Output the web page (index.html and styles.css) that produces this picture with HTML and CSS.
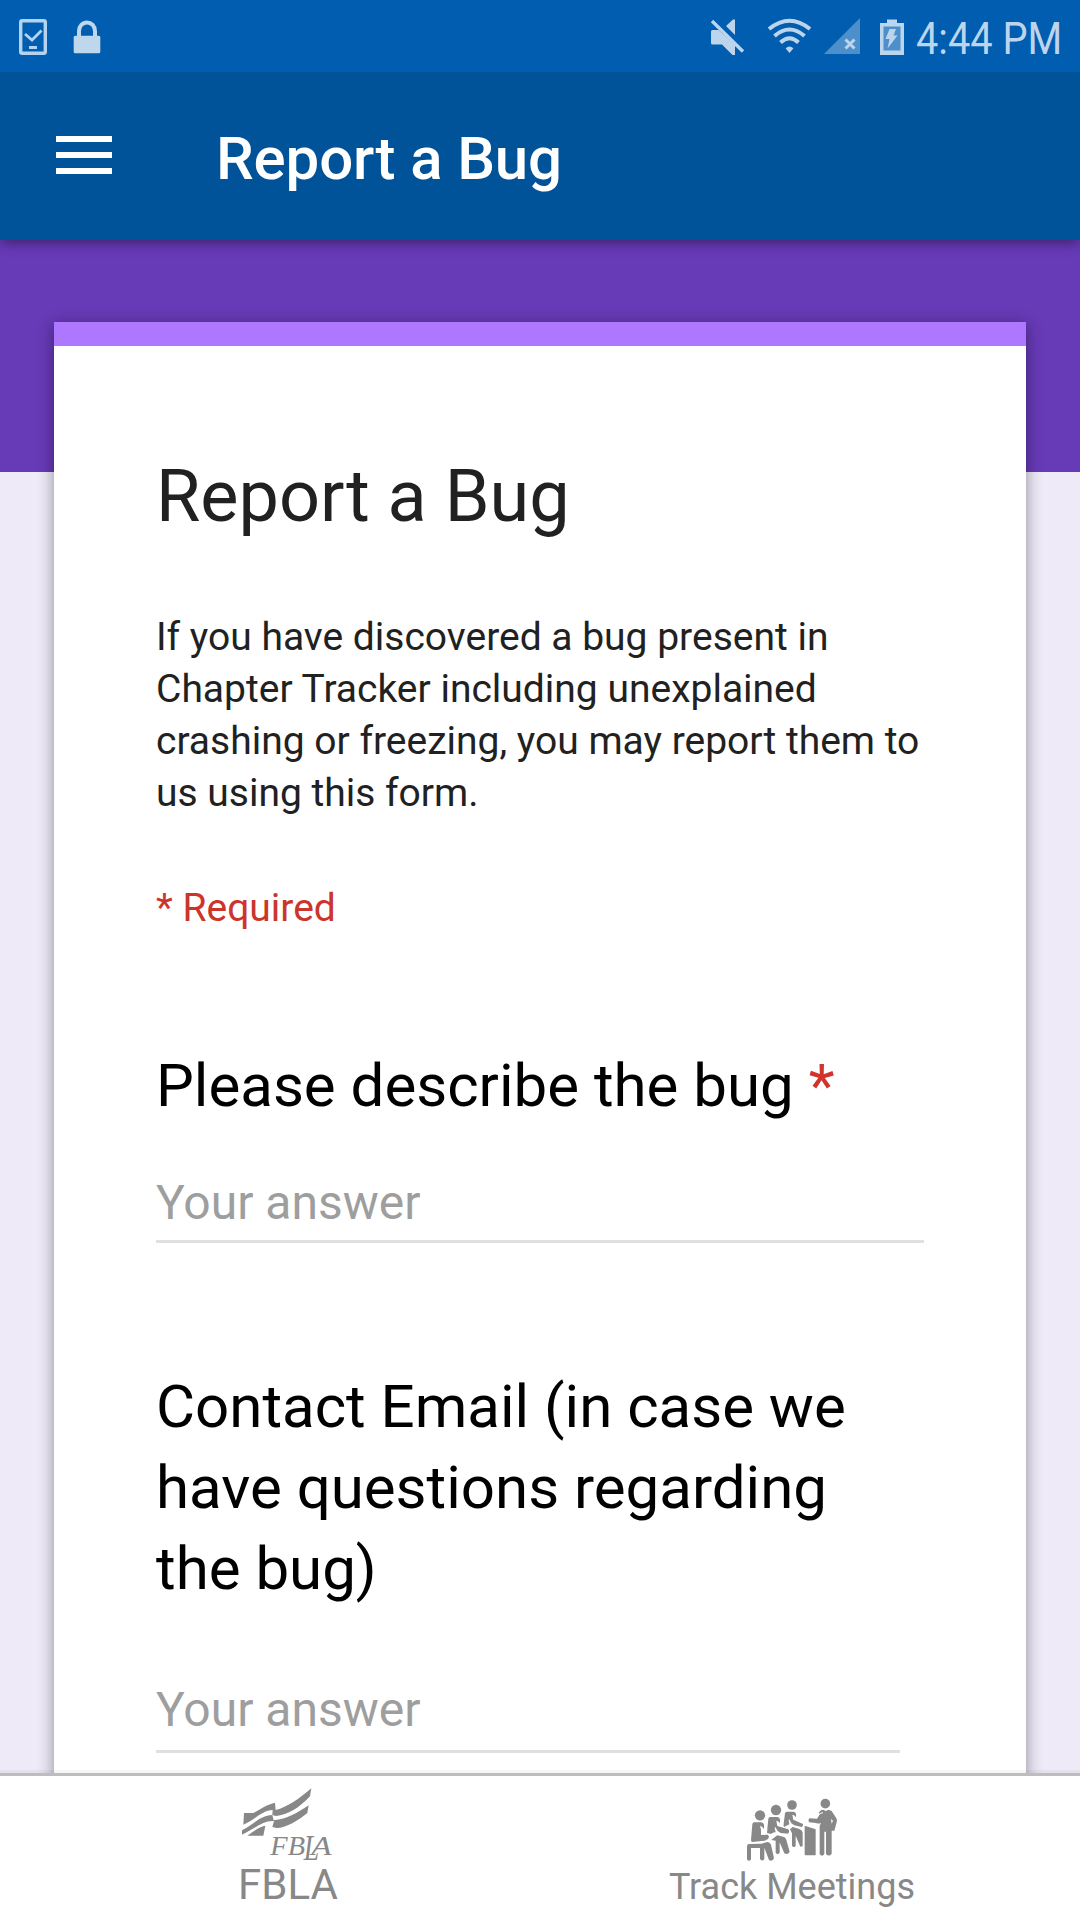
FILE: index.html
```html
<!DOCTYPE html>
<html lang="en">
<head>
<meta charset="utf-8">
<title>Report a Bug</title>
<link rel="stylesheet" href="styles.css">
</head>
<body>
<header class="top">
  <div class="status">
    <div class="status-left">
      <svg class="device" viewBox="19 19 28 36" width="28" height="36">
        <rect x="20.7" y="20.7" width="24.6" height="32.6" rx="1.5" fill="none" stroke="#b5d2f0" stroke-width="3.4"/>
        <path d="M25 34l7 6 9.500-9.500" fill="none" stroke="#b5d2f0" stroke-width="2.800"/>
        <path d="M29 47.500h8" stroke="#b5d2f0" stroke-width="3"/>
      </svg>
      <svg class="lock" viewBox="73 20 28 34" width="28" height="34">
        <path d="M79 37v-6a8 8.500 0 0 1 16 0v6" fill="none" stroke="#bfd7ec" stroke-width="4"/>
        <rect x="73.700" y="35.700" width="26.600" height="17.500" rx="1.500" fill="#bfd7ec"/>
      </svg>
    </div>
    <svg class="signals" viewBox="704 12 204 48" width="204" height="48">
      <g fill="#bcd5ec">
        <path d="M712.500 30h6L735 45v10h-2.500L722 44.500h-9.500q-1.500 0-1.500-1.500V31.500q0-1.500 1.500-1.500z"/>
        <path d="M726 26l7-6.500h2V35z"/>
        <path d="M714 19l32 32" fill="none" stroke="#005db0" stroke-width="3"/>
        <path d="M712 21l31 30.500" fill="none" stroke="#bcd5ec" stroke-width="3.400"/>
        <path d="M785.600 48.200q4-3.200 7.800 0l-3.900 4.800z"/>
      </g>
      <g fill="none" stroke="#bcd5ec" stroke-width="4">
        <path d="M769 29Q789.500 12.500 810 29"/>
        <path d="M774.500 36Q789.500 23 804.500 36"/>
        <path d="M780.500 42.500Q789.500 34 798.500 42.500"/>
      </g>
      <path d="M824 54l36-36v36z" fill="#4d8fcb"/>
      <path d="M845.500 39.500l9 9m0-9l-9 9" stroke="#bcd5ec" stroke-width="3"/>
      <path d="M887 19.500h10V23h7v32h-24V23h7z" fill="#bcd5ec"/>
      <path d="M883.500 26.500h17v24h-17z" fill="#4d8fcb"/>
      <path d="M889.500 29h6.500l-2.500 6.500h4L887.500 48.500l2-9.500h-4z" fill="#bcd5ec"/>
    </svg>
    <span class="clock">4:44 PM</span>
  </div>
  <div class="appbar">
    <div class="menu"><i></i><i></i><i></i></div>
    <div class="appbar-title">Report a Bug</div>
  </div>
</header>
<main class="page">
  <section class="card">
    <h1>Report a Bug</h1>
    <p class="desc">If you have discovered a bug present in<br>Chapter Tracker including unexplained<br>crashing or freezing, you may report them to<br>us using this form.</p>
    <p class="required">* Required</p>
    <div class="question q1">Please describe the bug <span class="star">*</span></div>
    <div class="answer a1">Your answer</div>
    <div class="question q2">Contact Email (in case we<br>have questions regarding<br>the bug)</div>
    <div class="answer a2">Your answer</div>
  </section>
</main>
<nav class="tabs">
  <div class="tab tab-fbla">
    <svg viewBox="120 72 282 240" width="94" height="80" fill="#888">
      <path d="M132 159h28C182 147 202 133 225 128L227 150C262 142 298 116 334 85L330 109C300 142 262 166 228 168L217 165 218 150C188 150 166 178 130 194z"/>
      <path d="M126 211C158 196 180 166 217 165L221 181C262 178 292 158 326 136L322 159C292 183 258 204 230 204L217 201 222 183C190 180 164 206 126 224z"/>
      <path d="M142 227C158 217 176 200 196 197L190 227z"/>
      <g class="logo-text">
        <text x="211" y="284" font-size="85" textLength="104" lengthAdjust="spacingAndGlyphs">FB</text>
        <text x="311" y="300" font-size="107" textLength="46" lengthAdjust="spacingAndGlyphs">L</text>
        <text x="334" y="284" font-size="85" textLength="61" lengthAdjust="spacingAndGlyphs">A</text>
      </g>
    </svg>
    <span class="label fbla-label">FBLA</span>
  </div>
  <div class="tab tab-meet">
    <svg viewBox="318 114 276 192" width="92" height="64" fill="#888">
      <!-- seated listeners, front to back -->
      <circle cx="360" cy="166" r="15.500"/>
      <path d="M342 187h22q8 2 8 8v12l-6-7-6-3 3 12v16l20-1q7 5 1 13l-10 5-37 4q-4 0-4-6l4-47q1-6 5-6z"/>
      <path d="M326 252l38-1 18-5q8 0 11 8l9 41q-5 11-15 5l-14-37v34q-6 9-13 0v-33h-27v34q-6 9-12 0v-39q0-6 5-7z"/>
      <circle cx="408" cy="150" r="15.500"/>
      <path d="M390 171h22q8 1 8 8v11l-6-6-5-2 3 16 33 10q5 7-1 13l-22-2-9-6-7-12-2 3 3 13q-8-1-14 5l-12-3 4-43q1-5 5-5z"/>
      <path d="M394 240l10-8 8-6 20 5q5 2 7 9l10 35q-5 11-16 5l-14-33v31q-6 8-12 0v-36z"/>
      <circle cx="456" cy="135" r="14.500"/>
      <path d="M440 155h20q8 1 8 7v10l-6-6-5-2 3 15 29 13q1 7-4 9l-22-5-9-6-6-12-2 3 2 12-16 8q-2-4-1-10l4-31q1-5 5-5z"/>
      <path d="M450 208l8-7 20 6q9 4 10 11v41l-7 1-14-33v31q-5 6-11 0v-38z"/>
      <!-- lectern and speaker -->
      <path d="M494 197l33 11v76q0 2-3 2h-27q-3 0-3-3z"/>
      <circle cx="556" cy="131" r="14.500"/>
      <path d="M545 150l5-1 7 4 9-4 9 4 14 22q4 6 1 12l-7 25h-8v69q-8 11-17 1v-67h-5v67q-7 10-14 0v-84l4-10q-7 5-15 1l-21-2q-4-7 1-12l23 1 9-14-4-4q4-6 9-8z"/>
      <path d="M573 177l2 14 4-9z" fill="#fff"/>
      <path d="M539 161l10-3" stroke="#fff" stroke-width="3"/>
    </svg>
    <span class="label meet-label">Track Meetings</span>
  </div>
</nav>
</body>
</html>
```
FILE: styles.css
```css
* { box-sizing: border-box; }
body {
  margin: 0;
  width: 1080px;
  height: 1920px;
  overflow: hidden;
  display: flex;
  flex-direction: column;
  font-family: Roboto, sans-serif;
  background: #eeeaf8;
}
h1, p { margin: 0; font-weight: 400; }
svg { display: block; flex: none; overflow: visible; }

.top {
  flex: none;
  position: relative;
  z-index: 2;
  box-shadow: 0 3px 12px rgba(0, 0, 0, .4);
}
.status {
  height: 72px;
  background: #005db0;
  display: flex;
  align-items: flex-start;
  padding: 0 18px 0 19px;
}
.status-left { display: flex; gap: 26px; padding-top: 19px; }
.lock { margin-top: 1px; }
.signals { margin: 12px 8px 0 auto; }
.clock {
  width: 146px;
  color: #bcd5ec;
  font-size: 45px;
  line-height: 77px;
  white-space: nowrap;
  transform: scaleX(.883);
  transform-origin: 0 0;
}
.appbar {
  height: 168px;
  background: #005299;
  display: flex;
  padding-left: 56px;
  color: #fff;
}
.menu {
  width: 56px;
  padding-top: 64px;
  display: flex;
  flex-direction: column;
  gap: 10px;
}
.menu i { height: 6px; background: #fff; }
.appbar-title {
  margin-left: 104px;
  font-size: 60px;
  font-weight: 500;
  letter-spacing: -.15px;
  line-height: 174px;
}

.page {
  height: 1533px;
  flex: none;
  overflow: hidden;
  padding: 82px 54px 0;
  background: linear-gradient(#673ab7 232px, #eeeaf8 232px);
}
.card {
  height: 1600px;
  background: #fff;
  border-top: 24px solid #ad78ff;
  box-shadow: 0 3px 15px rgba(0, 0, 0, .4);
  padding: 102px 102px 0;
  color: #212121;
}
h1 { font-size: 72px; line-height: 97px; }
.desc { margin-top: 66px; font-size: 39px; line-height: 52px; white-space: nowrap; }
.required { margin-top: 63px; font-size: 39px; line-height: 52px; color: #cb352b; }
.question { color: #000; font-size: 60px; line-height: 81px; white-space: nowrap; }
.q1 { margin-top: 111px; }
.star { color: #d0342b; }
.answer {
  border-bottom: 3px solid #e0e0e0;
  font-size: 48px;
  line-height: 72px;
  color: #9e9e9e;
}
.a1 { margin-top: 41px; width: 768px; height: 76px; }
.q2 { margin-top: 123px; }
.a2 { margin-top: 65px; width: 744px; height: 79px; }

.tabs {
  height: 147px;
  flex: none;
  position: relative;
  border-top: 3px solid #bdbdbd;
  background: #fff;
  box-shadow: 0 -3px 0 rgba(0, 0, 0, .04);
  display: flex;
  justify-content: space-between;
  color: #888;
}
.tab { display: flex; flex-direction: column; white-space: nowrap; }
.tab-fbla { padding: 8px 0 0 240px; }
.logo-text { font-family: "Liberation Serif", serif; font-style: italic; }
.fbla-label { font-size: 42px; line-height: 50px; margin: -4px 0 0 -2px; }
.tab-meet { padding: 22px 165px 0 0; }
.tab-meet svg { margin-left: 77px; }
.meet-label { font-size: 36px; line-height: 50px; }
```
